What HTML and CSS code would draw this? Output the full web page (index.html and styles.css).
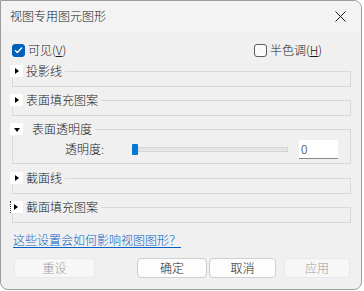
FILE: index.html
```html
<!DOCTYPE html>
<html lang="zh-CN">
<head>
  <meta charset="UTF-8">
  <title>视图专用图元图形</title>
  <link rel="stylesheet" href="styles.css">
</head>
<body>
  <div class="window">
    <div class="titlebar">
      <span class="title">视图专用图元图形</span>
      <span class="close">
        <svg width="11" height="11" viewBox="0 0 11 11"><path d="M0.5 0.5 L10.5 10.5 M10.5 0.5 L0.5 10.5" stroke="#1a1a1a" stroke-width="1"/></svg>
      </span>
    </div>

    <div class="content">
      <div class="check-row">
        <label class="check">
          <span class="box checked">
            <svg width="9" height="8" viewBox="0 0 9 8"><path d="M1 4.2 L3.4 6.5 L8 1.5" fill="none" stroke="#fff" stroke-width="1.3"/></svg>
          </span>
          <span class="check-text">可见(<u>V</u>)</span>
        </label>
        <label class="check">
          <span class="box"></span>
          <span class="check-text">半色调(<u>H</u>)</span>
        </label>
      </div>

      <fieldset class="group">
        <legend><span class="toggle"><span class="tri-right"></span></span><span class="group-title">投影线</span></legend>
      </fieldset>

      <fieldset class="group">
        <legend><span class="toggle"><span class="tri-right"></span></span><span class="group-title">表面填充图案</span></legend>
      </fieldset>

      <fieldset class="group open">
        <legend><span class="toggle"><span class="tri-down"></span></span><span class="group-title wide">表面透明度</span></legend>
        <div class="slider-row">
          <span class="slider-label">透明度:</span>
          <div class="slider">
            <span class="thumb"></span>
            <span class="track"></span>
          </div>
          <span class="num-input">0</span>
        </div>
      </fieldset>

      <fieldset class="group">
        <legend><span class="toggle"><span class="tri-right"></span></span><span class="group-title">截面线</span></legend>
      </fieldset>

      <fieldset class="group">
        <legend><span class="toggle focus"><span class="tri-right"></span></span><span class="group-title">截面填充图案</span></legend>
      </fieldset>

      <a class="help-link" href="#">这些设置会如何影响视图图形？</a>

      <div class="buttons">
        <button class="btn disabled reset">重设</button>
        <button class="btn ok">确定</button>
        <button class="btn cancel">取消</button>
        <button class="btn disabled apply">应用</button>
      </div>
    </div>
  </div>
</body>
</html>
```

FILE: styles.css
```css
:root {
  --bg: #f0f0f0;
  --title-bg: #f3f3f3;
  --line: #d9d9d9;
  --text: #1a1a1a;
  --accent: #005fb8;
  --link: #0a5fc4;
}

body {
  margin: 0;
  background: #ffffff;
  font-family: "Noto Sans CJK SC", "Noto Sans", sans-serif;
  font-size: 12px;
  font-weight: 300;
  color: var(--text);
}

.window {
  width: 360px;
  height: 288px;
  border: 1px solid #9c9c9c;
  border-radius: 0 8px 8px 8px;
  overflow: hidden;
  background: var(--bg);
  display: flex;
  flex-direction: column;
}

.titlebar {
  height: 30px;
  background: var(--title-bg);
  display: flex;
  align-items: center;
  padding-left: 9px;
  flex-shrink: 0;
}

.title {
  line-height: 14px;
}

.close {
  margin-left: auto;
  width: 26px;
  display: flex;
  align-items: center;
  padding-top: 1px;
}

.content {
  flex: 1;
  padding: 12px 10px 0 11px;
  display: flex;
  flex-direction: column;
}

/* checkboxes */
.check-row {
  display: flex;
  justify-content: space-between;
  padding-right: 29px;
  height: 14px;
  margin-bottom: 7px;
}

.check {
  display: flex;
  align-items: center;
  gap: 3px;
  line-height: 14px;
}

.check u {
  text-underline-offset: 1px;
}

.box {
  width: 11px;
  height: 11px;
  border: 1px solid #5c5c5c;
  border-radius: 3px;
  background: #fbfbfb;
  display: flex;
  align-items: center;
  justify-content: center;
}

.box.checked {
  background: var(--accent);
  border-color: var(--accent);
}

/* collapsible groups */
.group {
  margin: 0 0 6px 0;
  padding: 0 0 8px 0;
  min-width: 0;
  border: 1px solid var(--line);
}

.group legend {
  padding: 0;
  margin-left: -3px;
  display: flex;
  align-items: center;
  height: 14px;
}

.toggle {
  width: 13px;
  height: 12px;
  background: #ffffff;
  display: flex;
  align-items: center;
  justify-content: center;
  box-sizing: border-box;
}

.toggle.focus {
  border-left: 1px dotted #444;
  justify-content: flex-start;
  padding-left: 2px;
}

.tri-right {
  width: 0;
  height: 0;
  border-top: 3.5px solid transparent;
  border-bottom: 3.5px solid transparent;
  border-left: 4px solid #000;
  margin-left: 1px;
}

.tri-down {
  width: 0;
  height: 0;
  border-left: 3.5px solid transparent;
  border-right: 3.5px solid transparent;
  border-top: 4px solid #000;
  margin-top: 1px;
}

.group-title {
  line-height: 14px;
  padding: 0 3px 0 3px;
}

.group-title.wide {
  padding-left: 9px;
}

.group.open {
  padding: 3px 0 4px 0;
  margin-bottom: 7px;
}

.slider-row {
  display: flex;
  align-items: center;
  height: 20px;
}

.slider-label {
  margin-left: 52px;
  width: 40px;
  line-height: 14px;
}

.slider {
  margin-left: 27px;
  width: 156px;
  display: flex;
  align-items: center;
}

.thumb {
  width: 6px;
  height: 11px;
  background: #0078d4;
  border-radius: 1px;
}

.track {
  flex: 1;
  height: 3px;
  background: #e4e6e6;
  border: 1px solid #d3d6d6;
}

.num-input {
  margin-left: 11px;
  width: 37px;
  height: 18px;
  padding-left: 2px;
  background: #ffffff;
  border-bottom: 1px solid #8a8a8a;
  line-height: 18px;
}

/* link */
.help-link {
  margin-top: 4px;
  margin-left: 1px;
  color: var(--link);
  line-height: 14px;
  text-underline-offset: 2px;
}

/* buttons */
.buttons {
  display: flex;
  margin-top: 11px;
  padding-left: 2px;
  padding-right: 1px;
}

.btn {
  font-family: inherit;
  font-size: 12px;
  font-weight: inherit;
  height: 20px;
  padding: 0;
  border: 1px solid #d0d0d0;
  border-radius: 4px;
  background: #fdfdfd;
  color: var(--text);
  line-height: 16px;
}

.btn.disabled {
  background: #f7f7f7;
  border-color: #e8e8e8;
  color: #9d9d9d;
}

.reset {
  width: 81px;
  margin-right: auto;
}

.ok {
  width: 70px;
  margin-right: 2px;
}

.cancel {
  width: 67px;
  margin-right: 8px;
}

.apply {
  width: 66px;
}
```
